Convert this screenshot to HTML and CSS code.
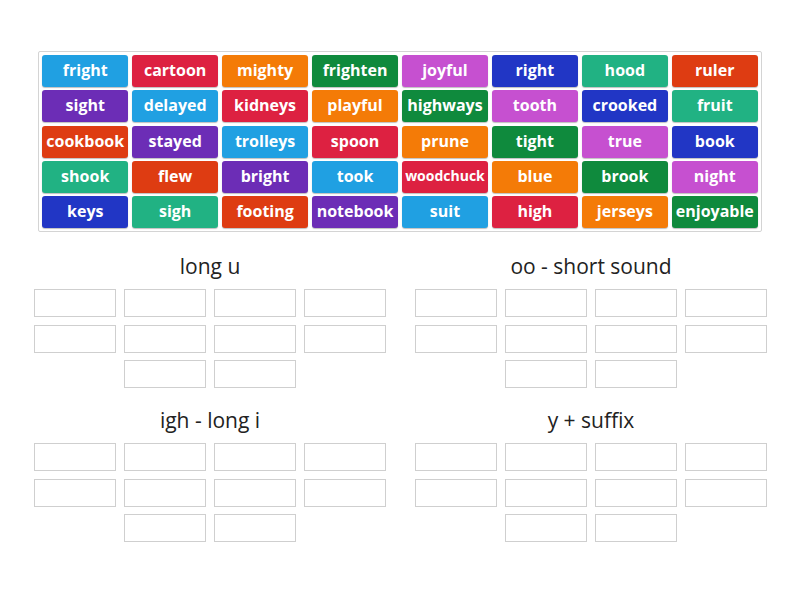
FILE: index.html
```html
<!DOCTYPE html>
<html lang="en">
<head>
  <meta charset="UTF-8">
  <meta name="viewport" content="width=device-width, initial-scale=1.0">
  <title>Group sort</title>
  <link rel="stylesheet" href="styles.css">
</head>
<body>

<div class="page">
  <div class="bank">
    <div class="tile c1">fright</div>
    <div class="tile c2">cartoon</div>
    <div class="tile c3">mighty</div>
    <div class="tile c4">frighten</div>
    <div class="tile c5">joyful</div>
    <div class="tile c6">right</div>
    <div class="tile c7">hood</div>
    <div class="tile c8">ruler</div>

    <div class="tile c9">sight</div>
    <div class="tile c1">delayed</div>
    <div class="tile c2">kidneys</div>
    <div class="tile c3">playful</div>
    <div class="tile c4">highways</div>
    <div class="tile c5">tooth</div>
    <div class="tile c6">crooked</div>
    <div class="tile c7">fruit</div>

    <div class="tile c8">cookbook</div>
    <div class="tile c9">stayed</div>
    <div class="tile c1">trolleys</div>
    <div class="tile c2">spoon</div>
    <div class="tile c3">prune</div>
    <div class="tile c4">tight</div>
    <div class="tile c5">true</div>
    <div class="tile c6">book</div>

    <div class="tile c7">shook</div>
    <div class="tile c8">flew</div>
    <div class="tile c9">bright</div>
    <div class="tile c1">took</div>
    <div class="tile c2 small">woodchuck</div>
    <div class="tile c3">blue</div>
    <div class="tile c4">brook</div>
    <div class="tile c5">night</div>

    <div class="tile c6">keys</div>
    <div class="tile c7">sigh</div>
    <div class="tile c8">footing</div>
    <div class="tile c9">notebook</div>
    <div class="tile c1">suit</div>
    <div class="tile c2">high</div>
    <div class="tile c3">jerseys</div>
    <div class="tile c4">enjoyable</div>
  </div>

  <div class="groups">
    <div class="group">
      <h2>long u</h2>
      <div class="slots">
        <div class="slot"></div><div class="slot"></div><div class="slot"></div><div class="slot"></div>
        <div class="slot"></div><div class="slot"></div><div class="slot"></div><div class="slot"></div>
        <div class="slot"></div><div class="slot"></div>
      </div>
    </div>

    <div class="group">
      <h2>oo - short sound</h2>
      <div class="slots">
        <div class="slot"></div><div class="slot"></div><div class="slot"></div><div class="slot"></div>
        <div class="slot"></div><div class="slot"></div><div class="slot"></div><div class="slot"></div>
        <div class="slot"></div><div class="slot"></div>
      </div>
    </div>

    <div class="group">
      <h2>igh - long i</h2>
      <div class="slots">
        <div class="slot"></div><div class="slot"></div><div class="slot"></div><div class="slot"></div>
        <div class="slot"></div><div class="slot"></div><div class="slot"></div><div class="slot"></div>
        <div class="slot"></div><div class="slot"></div>
      </div>
    </div>

    <div class="group">
      <h2>y + suffix</h2>
      <div class="slots">
        <div class="slot"></div><div class="slot"></div><div class="slot"></div><div class="slot"></div>
        <div class="slot"></div><div class="slot"></div><div class="slot"></div><div class="slot"></div>
        <div class="slot"></div><div class="slot"></div>
      </div>
    </div>
  </div>
</div>

</body>
</html>
```

FILE: styles.css
```css
body {
  margin: 0;
  background-color: #fff;
  font-family: 'Open Sans', 'Liberation Sans', sans-serif;
  color: #222;
}

.page {
  padding: 51px 0 0 34px;
}

/* word bank */

.bank {
  display: grid;
  grid-template-columns: repeat(8, 1fr);
  grid-auto-rows: 32px;
  gap: 3.25px 3.5px;
  width: 716px;
  padding: 3px;
  margin-left: 4px;
  border: 1px solid #d4d4d4;
  border-radius: 2px;
}

.tile {
  display: flex;
  align-items: center;
  justify-content: center;
  padding-bottom: 2px;
  color: #fff;
  font-size: 16px;
  font-weight: bold;
  border-radius: 3px;
  box-shadow: 0 1px 1px rgba(0, 0, 0, 0.25);
  white-space: nowrap;
}

.tile.small {
  font-size: 14px;
}

.c1 { background-color: #20a0e2; }
.c2 { background-color: #dd2141; }
.c3 { background-color: #f47b07; }
.c4 { background-color: #0f8a3d; }
.c5 { background-color: #c650d0; }
.c6 { background-color: #2136c5; }
.c7 { background-color: #21b283; }
.c8 { background-color: #de3c12; }
.c9 { background-color: #6c2db6; }

/* drop zones */

.groups {
  display: grid;
  grid-template-columns: 352px 352px;
  column-gap: 29px;
  row-gap: 18px;
  margin-top: 20px;
}

.group h2 {
  margin: 0 0 9px;
  font-size: 21px;
  font-weight: normal;
  line-height: 28px;
  text-align: center;
  color: #222;
}

.slots {
  display: flex;
  flex-wrap: wrap;
  justify-content: center;
  gap: 7.5px 8.5px;
}

.slot {
  width: 81.5px;
  height: 28px;
  box-sizing: border-box;
  border: 1px solid #cfcfcf;
}
```
